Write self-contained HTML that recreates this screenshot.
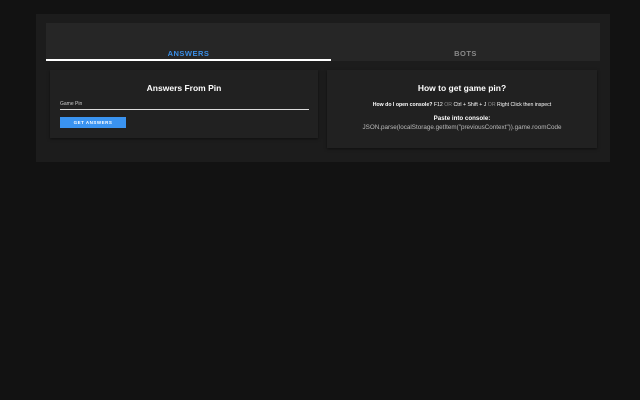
<html><head><style>
body{margin:0;width:640px;height:400px;background:#121212;font-family:"Liberation Sans",sans-serif;position:relative;overflow:hidden}
.a{position:absolute}
</style></head><body>
<div class="a" style="left:36px;top:14px;width:574px;height:148px;background:#1c1c1c"></div>
<div class="a" style="left:46px;top:23px;width:554px;height:38px;background:#262626"></div>
<div class="a" style="left:46px;top:49px;width:285px;text-align:center;font-size:7.5px;font-weight:bold;color:#3a8ee6;letter-spacing:.5px">ANSWERS</div>
<div class="a" style="left:331px;top:49px;width:269px;text-align:center;font-size:7.5px;font-weight:bold;color:#8a8a8a;letter-spacing:.5px">BOTS</div>
<div class="a" style="left:46px;top:59px;width:285px;height:2px;background:#fff"></div>
<div class="a" style="left:50px;top:70px;width:268px;height:68px;background:#212121;box-shadow:0 1px 3px rgba(0,0,0,.5)"></div>
<div class="a" style="left:50px;top:83px;width:268px;text-align:center;font-size:8.5px;font-weight:bold;color:#fff">Answers From Pin</div>
<div class="a" style="left:60px;top:101px;font-size:5px;color:#ccc">Game Pin</div>
<div class="a" style="left:60px;top:109px;width:249px;height:1px;background:#ddd"></div>
<div class="a" style="left:60px;top:117px;width:66px;height:11px;background:#3a93f0;color:#fff;font-size:4.5px;font-weight:bold;text-align:center;line-height:11px;letter-spacing:.5px">GET ANSWERS</div>
<div class="a" style="left:327px;top:70px;width:270px;height:78px;background:#212121;box-shadow:0 1px 3px rgba(0,0,0,.5)"></div>
<div class="a" style="left:327px;top:83px;width:270px;text-align:center;font-size:8.5px;font-weight:bold;color:#fff">How to get game pin?</div>
<div class="a" style="left:327px;top:102px;width:270px;text-align:center;font-size:5.2px;color:#fff"><b>How do I open console?</b> F12 <span style="color:#888">OR</span> Ctrl + Shift + J <span style="color:#888">OR</span> Right Click then inspect</div>
<div class="a" style="left:327px;top:115px;width:270px;text-align:center;font-size:6.2px;font-weight:bold;color:#fff">Paste into console:</div>
<div class="a" style="left:327px;top:124px;width:270px;text-align:center;font-size:6.3px;color:#bbb">JSON.parse(localStorage.getItem("previousContext")).game.roomCode</div>
</body></html>
